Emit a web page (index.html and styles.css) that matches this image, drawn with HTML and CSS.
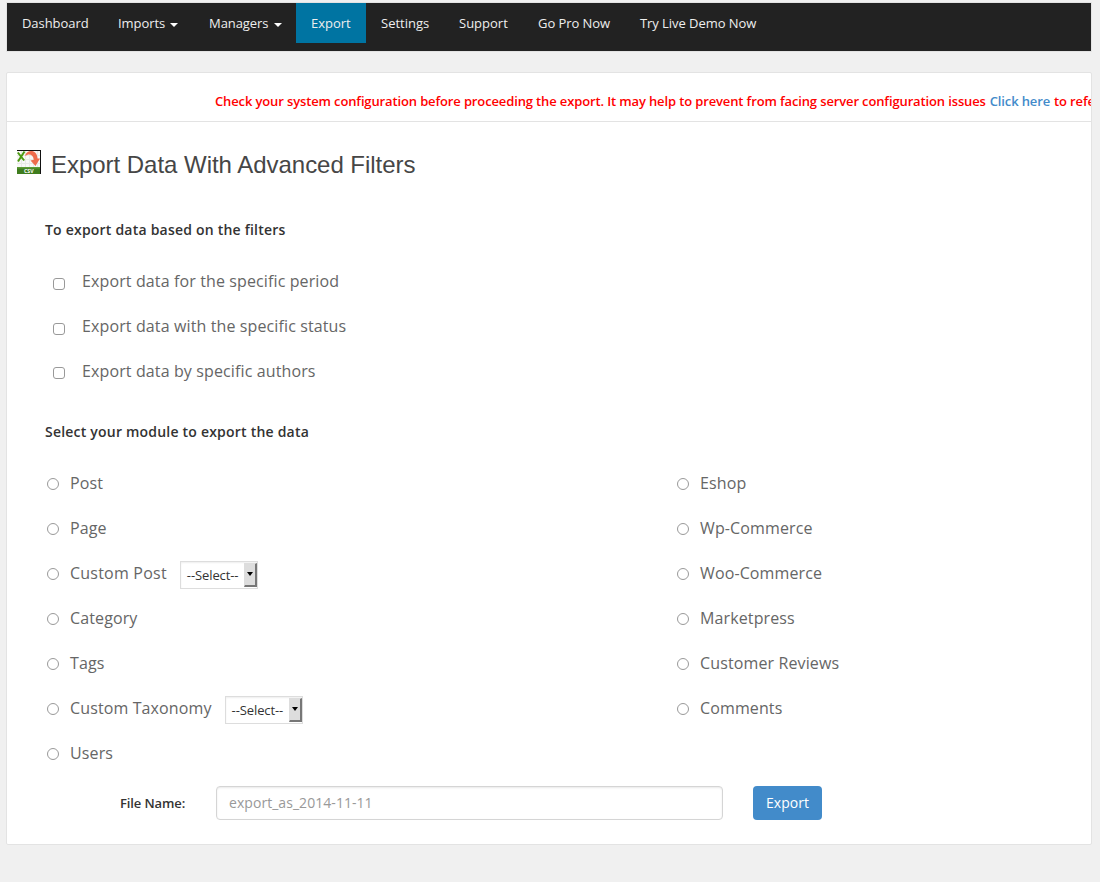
FILE: index.html
```html
<!DOCTYPE html>
<html lang="en">
<head>
<meta charset="utf-8">
<title>Export Data</title>
<link rel="stylesheet" href="styles.css">
</head>
<body>
<nav class="navbar">
  <a class="nav-item w-dashboard">Dashboard</a>
  <a class="nav-item w-imports">Imports<span class="caret"></span></a>
  <a class="nav-item w-managers">Managers<span class="caret"></span></a>
  <a class="nav-item w-export active">Export</a>
  <a class="nav-item w-settings">Settings</a>
  <a class="nav-item w-support">Support</a>
  <a class="nav-item w-gopro">Go Pro Now</a>
  <a class="nav-item w-demo">Try Live Demo Now</a>
</nav>
<main class="card">
  <div class="notice"><span class="notice-text">Check your system configuration before proceeding the export. It may help to prevent from facing server configuration issues</span><a class="notice-link">Click here</a><span>to refe</span></div>
  <header class="heading">
    <svg class="csv-icon" width="24" height="24" viewBox="0 0 24 24">
      <rect width="24" height="24" fill="#111"/>
      <path d="M0 1h23v17H0z" fill="#f8f8f6"/>
      <path d="M4.500 1v17M8.500 1v17M12.500 1v17M16.500 1v17M20.500 1v17M0 5.500h23M0 9.500h23M0 13.500h23" stroke="#e9e9e6" fill="none"/>
      <path d="M0 17h23v7H0z" fill="#3f7d1e"/>
      <path d="M0 17h23v1.500H0z" fill="#5c9a35"/>
      <path d="M.8 2.500l6.400 8M7.500 1.500l-6.500 10" stroke="#4b9a12" stroke-width="2" fill="none"/>
      <path d="M8 6C9.500 -.5 20-1.500 20.500 8.500H23L18.500 16 13.500 10.500l3.300-.8C16.500 4.500 12 2.800 8 6z" fill="#ef6c4d"/>
      <text x="7" y="22.600" class="csv-label" textLength="9.500" lengthAdjust="spacingAndGlyphs">CSV</text>
    </svg>
    <h1 class="title">Export Data With Advanced Filters</h1>
  </header>
  <h2 class="section-title first">To export data based on the filters</h2>
  <div class="filters">
    <label class="option"><input type="checkbox" class="check"><span>Export data for the specific period</span></label>
    <label class="option"><input type="checkbox" class="check"><span>Export data with the specific status</span></label>
    <label class="option"><input type="checkbox" class="check raised"><span>Export data by specific authors</span></label>
  </div>
  <h2 class="section-title second">Select your module to export the data</h2>
  <div class="modules">
    <div class="column">
      <label class="option"><input type="radio" class="radio"><span>Post</span></label>
      <label class="option"><input type="radio" class="radio"><span>Page</span></label>
      <div class="option"><input type="radio" class="radio"><span class="wide-label">Custom Post</span><div class="select"><span class="select-value">--Select--</span><span class="select-button"></span></div></div>
      <label class="option"><input type="radio" class="radio"><span>Category</span></label>
      <label class="option"><input type="radio" class="radio"><span>Tags</span></label>
      <div class="option"><input type="radio" class="radio"><span>Custom Taxonomy</span><div class="select"><span class="select-value">--Select--</span><span class="select-button"></span></div></div>
      <label class="option"><input type="radio" class="radio"><span>Users</span></label>
    </div>
    <div class="column">
      <label class="option"><input type="radio" class="radio"><span>Eshop</span></label>
      <label class="option"><input type="radio" class="radio"><span>Wp-Commerce</span></label>
      <label class="option"><input type="radio" class="radio"><span>Woo-Commerce</span></label>
      <label class="option"><input type="radio" class="radio"><span>Marketpress</span></label>
      <label class="option"><input type="radio" class="radio"><span>Customer Reviews</span></label>
      <label class="option"><input type="radio" class="radio"><span>Comments</span></label>
    </div>
  </div>
  <div class="file-row">
    <label class="file-label" for="file">File Name:</label>
    <input class="file-input" id="file" type="text" placeholder="export_as_2014-11-11">
    <button class="export-button" type="button">Export</button>
  </div>
</main>
</body>
</html>
```

FILE: styles.css
```css
* { box-sizing: border-box; }
body {
  margin: 0;
  padding: 2px 8px 0 6px;
  height: 882px;
  overflow: hidden;
  background: #f0f0f0;
  font-family: "Open Sans", sans-serif;
  font-size: 13px;
}
.navbar {
  display: flex;
  height: 50px;
  border: 1px solid #e3e3e3;
  background: #222;
}
.nav-item {
  display: flex;
  align-items: center;
  flex: none;
  height: 40px;
  padding: 0 0 0 15px;
  color: #eee;
  letter-spacing: -.06px;
  white-space: nowrap;
}
.active { background: #0074a2; }
.w-dashboard { width: 96px; }
.w-imports { width: 91px; }
.w-managers { width: 102px; }
.w-export { width: 70px; letter-spacing: 0; }
.w-settings { width: 78px; letter-spacing: 0; }
.w-support { width: 79px; letter-spacing: 0; }
.w-gopro { width: 102px; }
.w-demo { width: 146px; }
.caret {
  margin: 4px 0 0 5px;
  border: 4.5px solid transparent;
  border-top: 4px solid #fff;
  border-bottom: 0;
}
.card {
  height: 773px;
  margin-top: 20px;
  border: 1px solid #e3e3e3;
  border-radius: 2px;
  background: #fff;
}
.notice {
  display: flex;
  gap: 4px;
  height: 49px;
  padding: 19px 0 0 208px;
  overflow: hidden;
  border-bottom: 1px solid #e3e3e3;
  color: #f00;
  font-weight: 600;
  letter-spacing: -.132px;
  line-height: 18px;
  white-space: nowrap;
}
.notice-link { color: #428bca; }
.heading {
  display: flex;
  height: 78px;
  padding: 28px 0 0 10px;
  gap: 10px;
}
.csv-icon { flex: none; }
.csv-label { font: bold 5.500px "Open Sans", sans-serif; fill: #fff; }
.title {
  margin: 0;
  color: #464646;
  font: 400 24px/30px "Liberation Sans", Arial, sans-serif;
  letter-spacing: -.03px;
}
.section-title {
  margin: 0;
  padding-left: 38px;
  color: #333;
  font-size: 14px;
  font-weight: 600;
  letter-spacing: .21px;
  line-height: 20px;
}
.first { height: 59px; padding-top: 20px; }
.second { height: 67px; padding-top: 28px; }
.option {
  display: flex;
  align-items: center;
  height: 45px;
  padding-bottom: 2px;
  color: #666;
  font-size: 16px;
  letter-spacing: .12px;
  white-space: nowrap;
}
.wide-label { letter-spacing: .22px; }
.check, .radio {
  appearance: none;
  flex: none;
  width: 12px;
  height: 12px;
  border: 1px solid #999;
  background: #fff;
}
.check { margin: 7px 17px 0 46px; border-radius: 3px; }
.raised { margin-top: 5px; }
.radio { margin: 2px 11px 0 40px; border-radius: 50%; }
.modules { display: grid; grid-template-columns: 630px 1fr; }
.select {
  display: flex;
  width: 78px;
  height: 28px;
  margin: 4px 0 0 13px;
  padding: 1px 0 1px 6px;
  border: 1px solid #ddd;
  box-shadow: inset 0 1px 2px rgba(0, 0, 0, .07);
  color: #333;
  font-size: 13px;
  letter-spacing: -.1px;
}
.select-value { width: 57px; line-height: 24px; }
.select-button {
  display: flex;
  align-items: center;
  justify-content: center;
  width: 13px;
  background: #ddd;
  border: 1px solid #ddd;
  border-right: 2px solid #777;
  border-bottom: 2px solid #777;
}
.select-button::before {
  content: "";
  border: 3px solid transparent;
  border-top: 4px solid #000;
  border-bottom: 0;
}
.file-row {
  display: flex;
  height: 34px;
  margin-top: 10px;
  padding-left: 113px;
}
.file-label {
  width: 96px;
  color: #333;
  font-weight: 600;
  letter-spacing: -.1px;
  line-height: 34px;
}
.file-input {
  width: 507px;
  height: 34px;
  padding: 0 12px 2px;
  border: 1px solid #d5d5d5;
  border-radius: 4px;
  box-shadow: inset 0 1px 2px rgba(0, 0, 0, .09);
  font: 14px "Open Sans", sans-serif;
  letter-spacing: .05px;
}
.file-input::placeholder { color: #999; opacity: 1; }
.export-button {
  width: 69px;
  height: 34px;
  margin-left: 30px;
  padding: 0 0 2px;
  border: 0;
  border-radius: 4px;
  background: #428bca;
  color: #fff;
  font: 14px "Open Sans", sans-serif;
}
```
